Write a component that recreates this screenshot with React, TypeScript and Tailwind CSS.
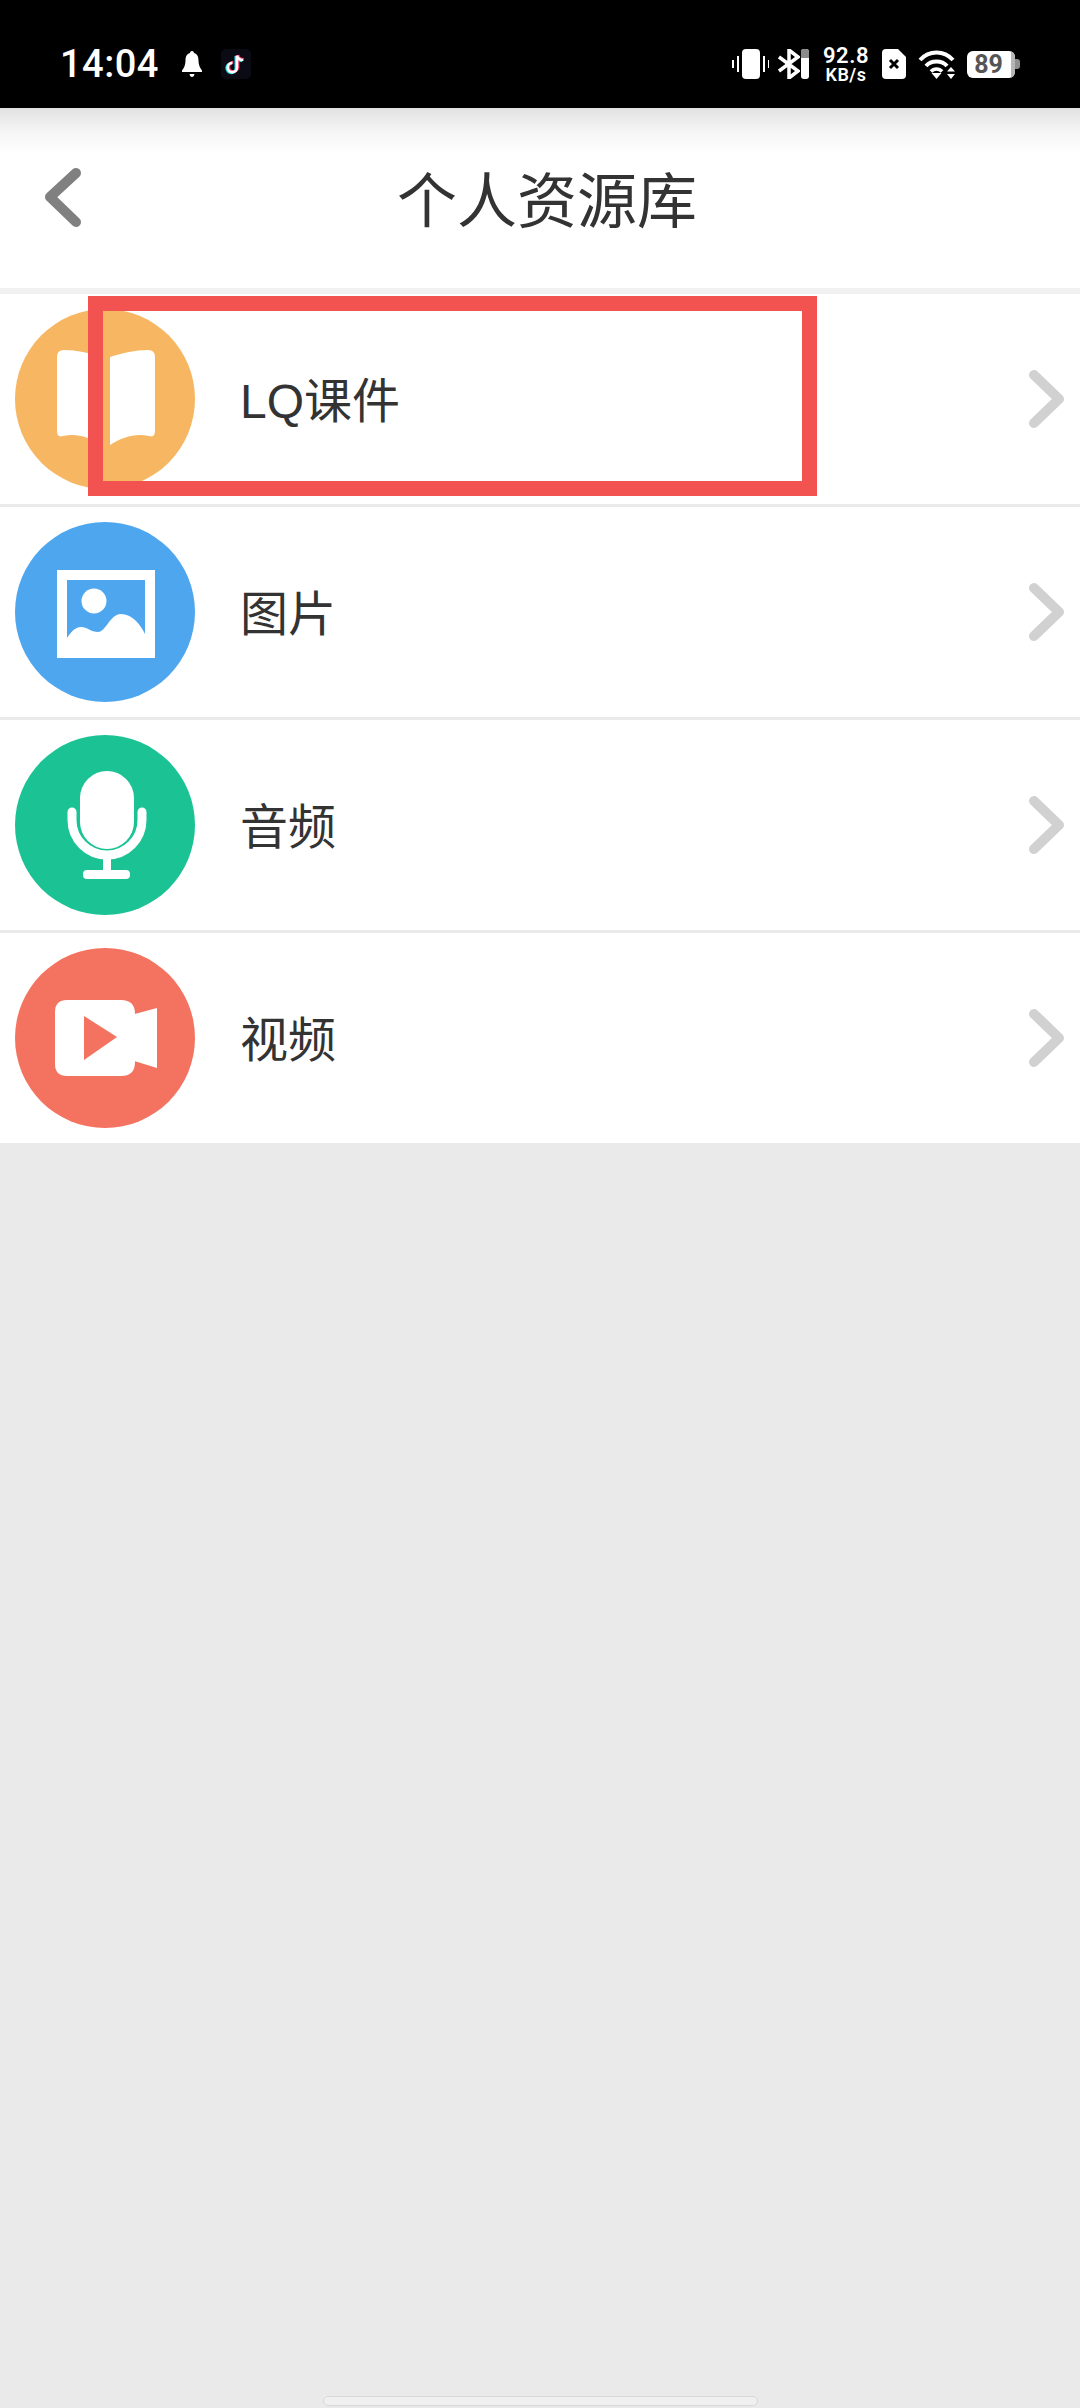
const rows = [
  { label: 'LQ课件', color: 'bg-[#F6B662]', icon: <BookIcon /> },
  { label: '图片', color: 'bg-[#4EA7EE]', icon: <PictureIcon /> },
  { label: '音频', color: 'bg-[#1BC394]', icon: <MicIcon /> },
  { label: '视频', color: 'bg-[#F47360]', icon: <VideoIcon /> },
];

function BookIcon() {
  return (
    <svg viewBox="0 0 180 180" className="w-full h-full">
      <path fill="#fff" d="M95 48C108 44 120 41 133 41Q140 41 140 48V122Q140 129 134 127C120 124 108 128 95 136Z" />
      <path fill="#fff" d="M87 48C74 44 62 41 49 41Q42 41 42 48V122Q42 129 48 127C62 124 74 128 87 136Z" />
    </svg>
  );
}

function PictureIcon() {
  return (
    <svg viewBox="0 0 180 180" className="w-full h-full">
      <path fill="#fff" fillRule="evenodd" d="M42 48H140V136H42ZM52 58V116C56 110 60 105 66 105C72 105 76 110 83 110C91 110 95 92 106 92C117 92 125 102 130 112V58Z" />
      <circle cx="79" cy="79" r="12.5" fill="#fff" />
    </svg>
  );
}

function MicIcon() {
  return (
    <svg viewBox="0 0 180 180" className="w-full h-full">
      <rect x="65" y="36" width="54" height="78" rx="27" fill="#fff" />
      <path d="M57 77V85A35 35 0 0 0 127 85V77" fill="none" stroke="#fff" strokeWidth="9" strokeLinecap="round" />
      <rect x="88" y="120" width="8" height="18" fill="#fff" />
      <rect x="68" y="135" width="47" height="9" rx="4" fill="#fff" />
    </svg>
  );
}

function VideoIcon() {
  return (
    <svg viewBox="0 0 180 180" className="w-full h-full">
      <path fill="#fff" fillRule="evenodd" d="M52 52H106Q120 52 120 66V114Q120 128 106 128H52Q40 128 40 116V64Q40 52 52 52ZM69 68V112L102 89Z" />
      <path fill="#fff" d="M116 67L142 60V120L116 112Z" />
    </svg>
  );
}

function StatusBar() {
  return (
    <div className="h-[108px] bg-black flex items-center justify-between pl-[60px] pr-[60px] pt-[20px] text-white font-['Roboto','Noto_Sans',sans-serif]">
      <div className="flex items-center">
        <span className="text-[38px] leading-[40px] font-medium tracking-[0.5px] w-[101px]">14:04</span>
        <svg viewBox="0 0 20 26" className="w-[20px] h-[26px] ml-[21px]">
          <path fill="#fff" d="M10 0C11.400 0 12 1 12 2C15.500 3 16.500 6 16.500 9.500C16.500 14 18 17 20 19.500V21H0V19.500C2 17 3.500 14 3.500 9.500C3.500 6 4.500 3 8 2C8 1 8.600 0 10 0ZM7.500 23H12.500C12.200 25 11.200 26 10 26C8.800 26 7.800 25 7.500 23Z" />
        </svg>
        <svg viewBox="0 0 30 30" className="w-[30px] h-[30px] ml-[19px]">
          <rect width="30" height="30" rx="5" fill="#0b0b16" />
          <path d="M16 6.500V18.500A4.600 4.600 0 1 1 11.400 13.900M16 6.500C16.500 9.500 19 11 22 11" fill="none" stroke="#25e0e0" strokeWidth="3" transform="translate(-1 0.600)" />
          <path d="M16 6.500V18.500A4.600 4.600 0 1 1 11.400 13.900M16 6.500C16.500 9.500 19 11 22 11" fill="none" stroke="#f0265c" strokeWidth="3" transform="translate(1 -0.600)" />
          <path d="M16 6.500V18.500A4.600 4.600 0 1 1 11.400 13.900M16 6.500C16.500 9.500 19 11 22 11" fill="none" stroke="#fff" strokeWidth="2.600" />
        </svg>
      </div>
      <div className="flex items-center">
        <svg viewBox="0 0 37 30" className="w-[37px] h-[30px]">
          <rect x="10" y="0" width="18" height="30" rx="4" fill="#fff" />
          <path d="M1 11V19M6 7V23M32 7V23M37 11V19" stroke="#fff" strokeWidth="2" />
        </svg>
        <svg viewBox="0 0 22 30" className="w-[22px] h-[30px] ml-[9px]">
          <path d="M1 8L20 22L11 29V1L20 8L1 22" fill="none" stroke="#fff" strokeWidth="3.500" />
        </svg>
        <div className="w-[8px] h-[30px] ml-[1px] rounded-[3px] bg-white overflow-hidden">
          <div className="h-[9px] bg-[#8a8a8a]" />
        </div>
        <div className="w-[46px] ml-[14px] flex flex-col items-center font-semibold">
          <span className="text-[22px] leading-[20px] tracking-[0.5px]">92.8</span>
          <span className="text-[18px] leading-[17px] tracking-[0.5px]">KB/s</span>
        </div>
        <svg viewBox="0 0 24 30" className="w-[24px] h-[30px] ml-[13px]">
          <path fill="#fff" d="M4 0H16L24 8V26Q24 30 20 30H4Q0 30 0 26V4Q0 0 4 0Z" />
          <path d="M8 11L16 19M16 11L8 19" stroke="#000" strokeWidth="3" />
        </svg>
        <svg viewBox="0 0 37 29" className="w-[37px] h-[29px] ml-[12px]">
          <path d="M2 10C11 0 26 0 35 10M8 16C13 10 24 10 29 16" fill="none" stroke="#fff" strokeWidth="4" />
          <path d="M13 21.500C16 18 21 18 24 21.500" fill="none" stroke="#fff" strokeWidth="3.500" />
          <path d="M13.500 23H23.500L18.500 29Z" fill="#fff" />
          <path d="M29 21.500H37L33 17ZM29 24H37L33 29Z" fill="#fff" />
        </svg>
        <div className="w-[48px] h-[27px] ml-[12px] rounded-[6px] bg-white flex items-center justify-center overflow-hidden relative">
          <span className="text-[25px] leading-[27px] font-bold text-[#555] pr-[5px]">89</span>
          <div className="absolute right-0 top-0 bottom-0 w-[4px] bg-[#b5b5b5]" />
        </div>
        <div className="w-[5px] h-[10px] bg-[#8f8f8f] rounded-r-[3px]" />
      </div>
    </div>
  );
}

export default function App() {
  return (
    <div className="relative min-h-[2408px] flex flex-col bg-[#EAEAEA] font-['Noto_Sans_CJK_SC','Noto_Sans',sans-serif] text-[#333]">
      <StatusBar />

      {/* header */}
      <div className="h-[180px] grid grid-cols-[108px_1fr_94px] items-center bg-[linear-gradient(to_bottom,#e2e2e2_0px,#f5f5f5_24px,#ffffff_46px)]">
        <svg viewBox="0 0 108 180" className="w-[108px] h-[180px]">
          <path d="M76 65L50 89L76 114" fill="none" stroke="#808080" strokeWidth="10" strokeLinecap="round" strokeLinejoin="round" />
        </svg>
        <h1 className="text-center text-[60px] leading-none font-normal pb-[3px]">个人资源库</h1>
      </div>
      <div className="h-[6px] bg-[#F1F1F1]" />

      {/* list */}
      <div className="bg-white">
        {rows.map((row, i) => (
          <div key={row.label} className={i < rows.length - 1 ? 'h-[213px] border-b-[3px] border-[#EAEAEA] flex items-center pl-[15px] pr-[10px]' : 'h-[210px] flex items-center pl-[15px] pr-[10px]'}>
            <div className={`w-[180px] h-[180px] rounded-full shrink-0 ${row.color}`}>{row.icon}</div>
            <span className="ml-[45px] flex-1 text-[48px] leading-none pt-[5px] font-['Liberation_Sans','Noto_Sans_CJK_SC',sans-serif]">{row.label}</span>
            <svg viewBox="0 0 46 66" className="w-[46px] h-[66px]">
              <path d="M10 9L35 33L10 57" fill="none" stroke="#D1D1D1" strokeWidth="10" strokeLinecap="round" strokeLinejoin="round" />
            </svg>
          </div>
        ))}
      </div>

      {/* annotation box */}
      <div className="absolute left-[88px] top-[296px] w-[729px] h-[200px] border-[15px] border-[#F25350]" />

      <div className="mt-auto mb-[2px] mx-auto w-[435px] h-[10px] rounded-full bg-[#F0F0F0] border border-[#D8D8D8]" />
    </div>
  );
}
